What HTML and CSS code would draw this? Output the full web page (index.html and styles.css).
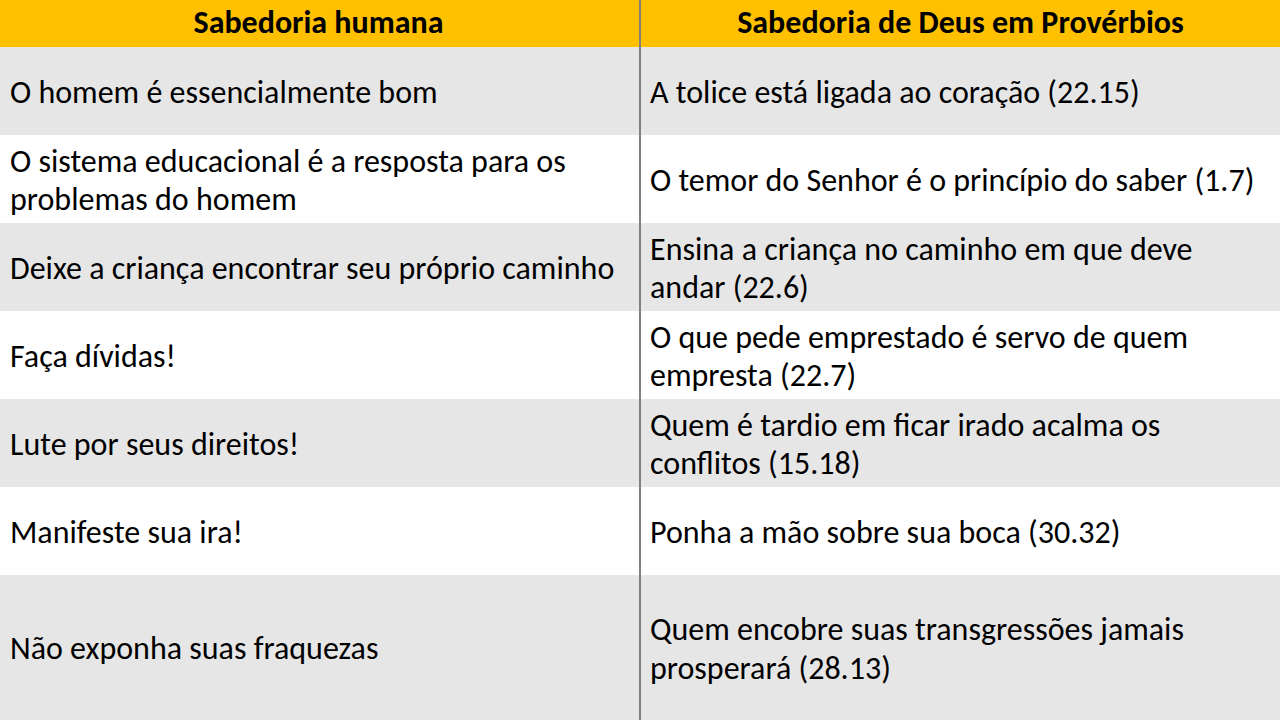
FILE: index.html
```html
<!DOCTYPE html>
<html lang="pt">
<head>
<meta charset="utf-8">
<title>Sabedoria</title>
<link rel="stylesheet" href="styles.css">
</head>
<body>
<div class="table">
  <div class="cell head left">Sabedoria humana</div>
  <div class="cell head right">Sabedoria de Deus em Provérbios</div>

  <div class="cell gray left">O homem é essencialmente bom</div>
  <div class="cell gray right">A tolice está ligada ao coração (22.15)</div>

  <div class="cell white left">O sistema educacional é a resposta para os<br>problemas do homem</div>
  <div class="cell white right">O temor do Senhor é o princípio do saber (1.7)</div>

  <div class="cell gray left">Deixe a criança encontrar seu próprio caminho</div>
  <div class="cell gray right">Ensina a criança no caminho em que deve<br>andar (22.6)</div>

  <div class="cell white left">Faça dívidas!</div>
  <div class="cell white right">O que pede emprestado é servo de quem<br>empresta (22.7)</div>

  <div class="cell gray left">Lute por seus direitos!</div>
  <div class="cell gray right">Quem é tardio em ficar irado acalma os<br>conflitos (15.18)</div>

  <div class="cell white left">Manifeste sua ira!</div>
  <div class="cell white right">Ponha a mão sobre sua boca (30.32)</div>

  <div class="cell gray left">Não exponha suas fraquezas</div>
  <div class="cell gray right">Quem encobre suas transgressões jamais<br>prosperará (28.13)</div>
</div>
</body>
</html>
```
FILE: styles.css
```css
* { box-sizing: border-box; }
html, body { margin: 0; padding: 0; }
body {
  width: 1280px;
  height: 720px;
  overflow: hidden;
  background: #ffffff;
  font-family: "Carlito", "Calibri", "Open Sans", sans-serif;
  color: #000000;
}
.table {
  display: grid;
  grid-template-columns: 641px 639px;
  grid-template-rows: 47px repeat(6, 88px) 1fr;
  width: 1280px;
  height: 720px;
}
.cell {
  display: flex;
  align-items: center;
  font-size: 32px;
  line-height: 38.5px;
  white-space: nowrap;
  padding-top: 4px;
}
.left {
  padding-left: 10px;
  border-right: 2px solid #7f7f7f;
}
.right {
  padding-left: 9px;
}
.head {
  background: #ffc000;
  font-weight: bold;
  justify-content: center;
  padding-left: 0;
  padding-top: 0;
}
.head.left { padding-right: 2px; }
.gray { background: #e7e6e6; }
.white { background: #ffffff; }
```
